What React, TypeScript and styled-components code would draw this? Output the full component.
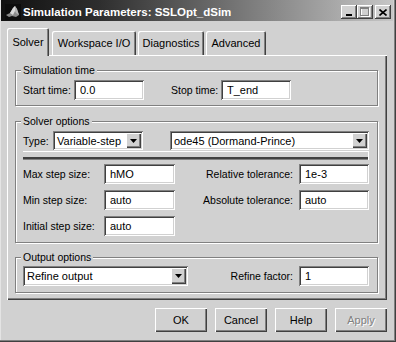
import React from 'react';
import styled, { createGlobalStyle } from 'styled-components';

const FACE = '#d1d1d1';
const HI = '#ffffff';
const SH = '#808080';
const DK = '#404040';
const FONT = `"Liberation Sans", Arial, sans-serif`;

const GlobalStyle = createGlobalStyle`
  html, body { margin: 0; padding: 0; background: ${FACE}; }
  body { font-family: ${FONT}; font-size: 11px; color: #000; }
  *, *::before, *::after { box-sizing: border-box; }
`;

const Window = styled.div`
  width: 396px;
  height: 342px;
  display: flex;
  flex-direction: column;
  background: ${FACE};
  padding: 0 3px 2px 1px;
  box-shadow: inset -1px -1px 0 ${DK}, inset -2px -2px 0 ${SH}, inset 1px 0 0 #e4e4e4;
`;

const TitleBar = styled.div`
  height: 21px;
  flex: none;
  display: flex;
  align-items: center;
  padding: 3px 2px 0 4px;
  background: linear-gradient(90deg, #101010 0%, #2e2e2e 25%, #c6c6c6 100%);
`;

const AppIcon = styled.svg`
  width: 16px;
  height: 16px;
  flex: none;
  margin-right: 2px;
`;

const Title = styled.span`
  flex: 1;
  color: #fff;
  font-weight: bold;
  font-size: 11.5px;
  white-space: nowrap;
`;

const Controls = styled.div`
  display: flex;
  flex: none;
`;

const CtlButton = styled.div<{ $gap?: number }>`
  width: 16px;
  height: 14px;
  margin-left: ${(p) => p.$gap ?? 0}px;
  background: ${FACE};
  box-shadow: inset -1px -1px 0 ${DK}, inset 1px 1px 0 ${HI}, inset -2px -2px 0 ${SH};
  display: flex;
  align-items: center;
  justify-content: center;
`;

const Body = styled.div`
  flex: 1;
  display: flex;
  flex-direction: column;
  padding: 7px 6px 0 6px;
`;

const TabStrip = styled.div`
  display: flex;
  align-items: flex-end;
  height: 27px;
  flex: none;
`;

const Tab = styled.div<{ $active?: boolean; $w: number; $ml: number }>`
  width: ${(p) => p.$w}px;
  margin-left: ${(p) => p.$ml}px;
  height: ${(p) => (p.$active ? 28 : 24)}px;
  margin-bottom: ${(p) => (p.$active ? -1 : 0)}px;
  position: relative;
  z-index: ${(p) => (p.$active ? 1 : 0)};
  background: ${FACE};
  font-size: 11px;
  display: flex;
  align-items: center;
  justify-content: center;
  white-space: nowrap;
  border-radius: 2px 2px 0 0;
  box-shadow: inset 1px 1px 0 ${HI}, inset -1px 0 0 ${DK}, inset -2px 0 0 ${SH};
`;

const Panel = styled.div`
  height: 245px;
  flex: none;
  display: flex;
  flex-direction: column;
  padding: 15px 9px 0 8px;
  box-shadow: inset 1px 1px 0 ${HI}, inset -1px -1px 0 ${DK}, inset -2px -2px 0 ${SH};
`;

const Group = styled.div<{ $mt?: number; $pb: number }>`
  margin-top: ${(p) => p.$mt ?? 0}px;
  border: 1px solid ${SH};
  box-shadow: 1px 1px 0 ${HI}, inset 1px 1px 0 ${HI};
  padding: 0 8px ${(p) => p.$pb}px 7px;
`;

const Legend = styled.div`
  width: fit-content;
  margin: -7px 0 0 -2px;
  padding: 0 2px;
  line-height: 13px;
  background: ${FACE};
  font-size: 10.5px;
  white-space: nowrap;
`;

const Row = styled.div<{ $mt: number }>`
  display: flex;
  align-items: center;
  margin-top: ${(p) => p.$mt}px;
  height: 20px;
`;

const Label = styled.span<{ $w?: number; $pl?: number }>`
  font-size: 10.5px;
  white-space: nowrap;
  flex: none;
  width: ${(p) => (p.$w ? `${p.$w}px` : 'auto')};
  padding-left: ${(p) => p.$pl ?? 0}px;
`;

const RightLabel = styled.span`
  font-size: 10.5px;
  white-space: nowrap;
  text-align: right;
  padding-right: 6px;
`;

const Field = styled.input<{ $w?: number }>`
  width: ${(p) => p.$w ?? 70}px;
  height: 20px;
  flex: none;
  border: none;
  outline: none;
  margin: 0;
  padding: 0 2px 0 6px;
  background: #fff;
  font-family: ${FONT};
  font-size: 11px;
  color: #000;
  box-shadow: inset 1px 1px 0 ${SH}, inset -1px -1px 0 ${HI}, inset 2px 2px 0 ${DK}, inset -2px -2px 0 ${FACE};
`;

const Combo = styled.div<{ $w?: number; $h: number }>`
  width: ${(p) => (p.$w ? `${p.$w}px` : 'auto')};
  flex: ${(p) => (p.$w ? 'none' : '1')};
  height: ${(p) => p.$h}px;
  display: flex;
  align-items: center;
  padding: 2px;
  background: #fff;
  box-shadow: inset 1px 1px 0 ${SH}, inset -1px -1px 0 ${HI}, inset 2px 2px 0 ${DK}, inset -2px -2px 0 ${FACE};
`;

const ComboText = styled.span`
  flex: 1;
  padding-left: 2px;
  font-size: 11px;
  white-space: nowrap;
  overflow: hidden;
`;

const DropButton = styled.div`
  width: 15px;
  align-self: stretch;
  flex: none;
  background: ${FACE};
  box-shadow: inset 1px 1px 0 ${HI}, inset -1px -1px 0 ${DK}, inset -2px -2px 0 ${SH};
  display: flex;
  align-items: center;
  justify-content: center;
`;

const TypeRow = styled.div`
  display: flex;
  align-items: center;
  margin-top: 3px;
  height: 19px;
`;

const Separator = styled.div`
  height: 9px;
  margin: 1px 0 4px;
  box-shadow: inset 0 1px 0 ${HI}, inset -1px 0 0 ${HI}, inset 0 -1px 0 ${SH}, inset 0 -3px 0 ${DK};
`;

const StepGrid = styled.div`
  display: grid;
  grid-template-columns: 81px 71px 1fr 70px;
  grid-auto-rows: 20px;
  row-gap: 6px;
  align-items: center;
`;

const OutputGrid = styled.div`
  display: grid;
  grid-template-columns: 165px 1fr 70px;
  grid-auto-rows: 20px;
  align-items: center;
  margin-top: 2px;
`;

const ButtonRow = styled.div`
  display: flex;
  justify-content: flex-end;
  gap: 8px;
  margin-top: 8px;
`;

const Button = styled.button<{ $disabled?: boolean }>`
  width: 52px;
  height: 24px;
  border: none;
  padding: 0;
  background: ${FACE};
  font-family: ${FONT};
  font-size: 11px;
  color: ${(p) => (p.$disabled ? SH : '#000')};
  text-shadow: ${(p) => (p.$disabled ? `1px 1px 0 ${HI}` : 'none')};
  box-shadow: inset 1px 1px 0 ${HI}, inset -1px -1px 0 ${DK}, inset -2px -2px 0 ${SH};
`;

const Arrow = () => (
  <svg width="7" height="4" viewBox="0 0 7 4">
    <polygon points="0,0 7,0 3.5,4" fill="#000" />
  </svg>
);

const Select = ({ text, w, h }: { text: string; w?: number; h: number }) => (
  <Combo $w={w} $h={h}>
    <ComboText>{text}</ComboText>
    <DropButton>
      <Arrow />
    </DropButton>
  </Combo>
);

export default function App() {
  return (
    <>
      <GlobalStyle />
      <Window>
        <TitleBar>
          <AppIcon viewBox="0 0 16 16">
            <rect width="16" height="16" fill="#0c0c0c" />
            <polygon points="1,11 5,9 8,4 10,2 12,5 14,11 11,13 7,12 4,13" fill="#8a8a8a" />
            <polygon points="5,9 8,4 10,2 10,7 8,11" fill="#d8d8d8" />
            <polygon points="10,2 12,5 14,11 11,9 10,7" fill="#b4b4b4" />
          </AppIcon>
          <Title>Simulation Parameters: SSLOpt_dSim</Title>
          <Controls>
            <CtlButton>
              <svg width="8" height="7" viewBox="0 0 8 7">
                <rect x="1" y="5" width="6" height="2" fill="#000" />
              </svg>
            </CtlButton>
            <CtlButton>
              <svg width="10" height="10" viewBox="0 0 10 10">
                <rect x="1.5" y="1.5" width="8" height="8" fill="none" stroke={HI} />
                <rect x="0.5" y="0.5" width="8" height="8" fill="none" stroke={SH} />
                <rect x="0" y="1" width="9" height="1" fill={SH} />
              </svg>
            </CtlButton>
            <CtlButton $gap={2}>
              <svg width="8" height="7" viewBox="0 0 8 7">
                <path d="M0.5 0.5 L7.5 6.5 M7.5 0.5 L0.5 6.5" stroke="#000" strokeWidth="1.6" />
              </svg>
            </CtlButton>
          </Controls>
        </TitleBar>
        <Body>
          <TabStrip>
            <Tab $active $w={42} $ml={0}>Solver</Tab>
            <Tab $w={84} $ml={3}>Workspace I/O</Tab>
            <Tab $w={66} $ml={2}>Diagnostics</Tab>
            <Tab $w={60} $ml={2}>Advanced</Tab>
          </TabStrip>
          <Panel>
            <Group $pb={5}>
              <Legend>Simulation time</Legend>
              <Row $mt={3}>
                <Label $w={51}>Start time:</Label>
                <Field $w={70} defaultValue="0.0" readOnly />
                <Label $w={77} $pl={27}>Stop time:</Label>
                <Field $w={70} defaultValue="T_end" readOnly />
              </Row>
            </Group>
            <Group $mt={15} $pb={6}>
              <Legend>Solver options</Legend>
              <TypeRow>
                <Label $w={30}>Type:</Label>
                <Select text="Variable-step" w={90} h={19} />
                <Label $w={27} />
                <Select text="ode45 (Dormand-Prince)" h={19} />
              </TypeRow>
              <Separator />
              <StepGrid>
                <Label>Max step size:</Label>
                <Field $w={71} defaultValue="hMO" readOnly />
                <RightLabel>Relative tolerance:</RightLabel>
                <Field $w={70} defaultValue="1e-3" readOnly />
                <Label>Min step size:</Label>
                <Field $w={71} defaultValue="auto" readOnly />
                <RightLabel>Absolute tolerance:</RightLabel>
                <Field $w={70} defaultValue="auto" readOnly />
                <Label>Initial step size:</Label>
                <Field $w={71} defaultValue="auto" readOnly />
              </StepGrid>
            </Group>
            <Group $mt={14} $pb={6}>
              <Legend>Output options</Legend>
              <OutputGrid>
                <Select text="Refine output" w={165} h={20} />
                <RightLabel>Refine factor:</RightLabel>
                <Field $w={70} defaultValue="1" readOnly />
              </OutputGrid>
            </Group>
          </Panel>
          <ButtonRow>
            <Button>OK</Button>
            <Button>Cancel</Button>
            <Button>Help</Button>
            <Button $disabled>Apply</Button>
          </ButtonRow>
        </Body>
      </Window>
    </>
  );
}
